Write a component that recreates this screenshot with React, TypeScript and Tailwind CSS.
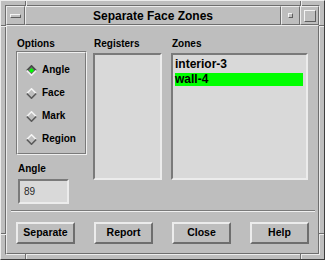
import React from "react";

function Diamond({ on }: { on?: boolean }) {
  const top = on ? "#4a4a4a" : "#f4f4f4";
  const bot = on ? "#f4f4f4" : "#5a5a5a";
  return (
    <svg width="11" height="11" viewBox="0 0 11 11" className="shrink-0">
      <polygon points="5.5,0.5 10.5,5.5 5.5,10.5 0.5,5.5" fill={on ? "#6a6a6a" : "#bebebe"} />
      <polyline points="0.8,5.5 5.5,0.8 10.2,5.5" fill="none" stroke={top} strokeWidth="1.6" />
      <polyline points="0.8,5.5 5.5,10.2 10.2,5.5" fill="none" stroke={bot} strokeWidth="1.6" />
      {on && <polygon points="5.5,3 8,5.5 5.5,8 3,5.5" fill="#00ff00" />}
    </svg>
  );
}

function Radio({ label, on }: { label: string; on?: boolean }) {
  return (
    <div className="flex items-center h-[12px] gap-[5px] pl-[8px]">
      <Diamond on={on} />
      <span className="text-[10px] leading-[12px] font-bold text-black">{label}</span>
    </div>
  );
}

function Btn({ label }: { label: string }) {
  return (
    <div className="w-[59px] h-[22px] flex items-center justify-center border-2 border-t-[#ececec] border-l-[#ececec] border-r-[#6e6e6e] border-b-[#6e6e6e] bg-[#bebebe] text-[10.5px] font-bold text-black">
      {label}
    </div>
  );
}

const raised = "border border-t-[#ececec] border-l-[#ececec] border-r-[#6e6e6e] border-b-[#6e6e6e]";

export default function App() {
  return (
    <div className="relative w-[325px] h-[260px] bg-[#bebebe] border border-t-[#ececec] border-l-[#ececec] border-r-[#3e3e3e] border-b-[#3e3e3e] p-[4px] font-['Liberation_Sans',Arial,sans-serif] text-black select-none">
      <div className="w-full h-full border border-t-[#6e6e6e] border-l-[#6e6e6e] border-r-[#ececec] border-b-[#ececec] flex flex-col">
        {/* title bar */}
        <div className="flex h-[19px] shrink-0">
          <div className={`w-[19px] ${raised} flex items-center justify-center`}>
            <div className="w-[11px] h-[4px] border border-t-[#f4f4f4] border-l-[#f4f4f4] border-r-[#5e5e5e] border-b-[#5e5e5e]" />
          </div>
          <div className={`flex-1 ${raised} flex items-center justify-center text-[12px] font-bold`}>
            Separate Face Zones
          </div>
          <div className={`w-[19px] ${raised} flex items-center justify-center`}>
            <div className="w-[5px] h-[5px] border border-t-[#f4f4f4] border-l-[#f4f4f4] border-r-[#5e5e5e] border-b-[#5e5e5e]" />
          </div>
          <div className={`w-[19px] ${raised} flex items-center justify-center`}>
            <div className="w-[12px] h-[12px] border border-t-[#f4f4f4] border-l-[#f4f4f4] border-r-[#5e5e5e] border-b-[#5e5e5e]" />
          </div>
        </div>
        {/* client */}
        <div className={`flex-1 ${raised} flex flex-col pt-[12px]`}>
          <div className="flex px-[9px]">
            {/* options column */}
            <div className="w-[71px] flex flex-col">
              <div className="h-[12px] leading-[12px] text-[10px] font-bold pl-[1px]">Options</div>
              <div className="mt-[1px] h-[104px] border border-t-[#7a7a7a] border-l-[#7a7a7a] border-r-[#f0f0f0] border-b-[#f0f0f0]">
                <div className="h-full border border-t-[#f0f0f0] border-l-[#f0f0f0] border-r-[#7a7a7a] border-b-[#7a7a7a] pt-[11px] flex flex-col gap-[11px]">
                  <Radio label="Angle" on />
                  <Radio label="Face" />
                  <Radio label="Mark" />
                  <Radio label="Region" />
                </div>
              </div>
              <div className="pl-[2px] mt-[8px] flex flex-col">
                <div className="h-[12px] leading-[12px] text-[10px] font-bold">Angle</div>
                <div className="mt-[4px] w-[51px] h-[25px] bg-[#d9d9d9] border-2 border-t-[#7a7a7a] border-l-[#7a7a7a] border-r-[#ececec] border-b-[#ececec] flex items-center pl-[4px] text-[10px] text-[#2a2a2a]">
                  89
                </div>
              </div>
            </div>
            {/* registers */}
            <div className="w-[69px] ml-[6px] flex flex-col">
              <div className="h-[12px] leading-[12px] text-[10px] font-bold pl-[1px]">Registers</div>
              <div className="mt-[3px] h-[127px] bg-[#d9d9d9] border-2 border-t-[#7a7a7a] border-l-[#7a7a7a] border-r-[#ececec] border-b-[#ececec]" />
            </div>
            {/* zones */}
            <div className="w-[137px] ml-[9px] flex flex-col">
              <div className="h-[12px] leading-[12px] text-[10px] font-bold pl-[1px]">Zones</div>
              <div className="mt-[3px] h-[127px] bg-[#d9d9d9] border-2 border-t-[#7a7a7a] border-l-[#7a7a7a] border-r-[#ececec] border-b-[#ececec] pt-[3px] pl-[2px] pr-[3px] flex flex-col gap-[2px]">
                <div className="h-[13px] leading-[13px] text-[12px] font-bold">interior-3</div>
                <div className="h-[13px] leading-[13px] text-[12px] font-bold bg-[#00ff00]">wall-4</div>
              </div>
            </div>
          </div>
          {/* separator */}
          <div className="mt-[6px] ml-[4px] mr-[3px] h-[2px] border-t border-t-[#7a7a7a] border-b border-b-[#f0f0f0]" />
          {/* buttons */}
          <div className="mt-[10px] px-[9px] flex gap-[19px]">
            <Btn label="Separate" />
            <Btn label="Report" />
            <Btn label="Close" />
            <Btn label="Help" />
          </div>
        </div>
      </div>
      {/* frame resize notches */}
      <div className="absolute left-[24px] top-0 w-[2px] h-[5px] border-l border-l-[#6e6e6e] border-r border-r-[#ececec]" />
      <div className="absolute left-[299px] top-0 w-[2px] h-[5px] border-l border-l-[#6e6e6e] border-r border-r-[#ececec]" />
      <div className="absolute left-[24px] bottom-0 w-[2px] h-[5px] border-l border-l-[#6e6e6e] border-r border-r-[#ececec]" />
      <div className="absolute left-[299px] bottom-0 w-[2px] h-[5px] border-l border-l-[#6e6e6e] border-r border-r-[#ececec]" />
      <div className="absolute left-0 top-[24px] w-[5px] h-[2px] border-t border-t-[#6e6e6e] border-b border-b-[#ececec]" />
      <div className="absolute right-0 top-[24px] w-[5px] h-[2px] border-t border-t-[#6e6e6e] border-b border-b-[#ececec]" />
      <div className="absolute left-0 top-[232px] w-[5px] h-[2px] border-t border-t-[#6e6e6e] border-b border-b-[#ececec]" />
      <div className="absolute right-0 top-[232px] w-[5px] h-[2px] border-t border-t-[#6e6e6e] border-b border-b-[#ececec]" />
    </div>
  );
}
